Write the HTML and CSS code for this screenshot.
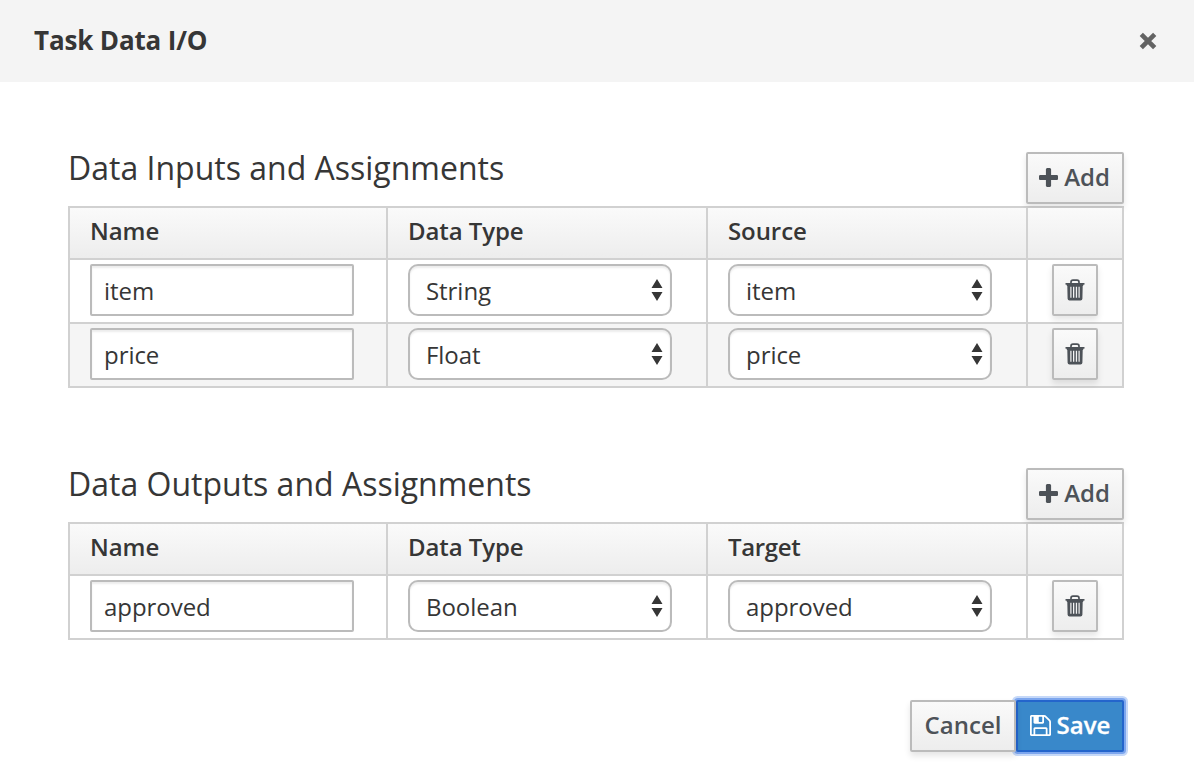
FILE: index.html
```
<!DOCTYPE html>
<html lang="en">
<head>
<meta charset="utf-8">
<title>Task Data I/O</title>
<link rel="stylesheet" href="styles.css">
</head>
<body>
<svg class="sprite" aria-hidden="true">
  <symbol id="trash" viewBox="0 0 20 22">
    <path d="M6 4.600V3.200Q6 1.200 8 1.200h4Q14 1.200 14 3.200V4.600" fill="none" stroke="currentColor" stroke-width="1.700"/>
    <path fill="currentColor" fill-rule="evenodd" d="M1 4h18q.6 0 .6.6v.5q0 .6-.6.6h-.8v1.300h-.5l-.3 12.700q-.1 1.800-1.900 1.800H4.500q-1.800 0-1.900-1.800L2.300 7h-.5V5.700H1q-.6 0-.6-.6v-.5Q.4 4 1 4zM5.300 7.700v11h1.200V7.700zM8 7.700v11h1.300V7.700zM10.800 7.700v11h1.300V7.700zM13.500 7.700v11h1.200V7.700z"/>
  </symbol>
  <symbol id="plus" viewBox="0 0 1408 1408">
    <path fill="currentColor" d="M1408 608v192q0 40-28 68t-68 28H896v416q0 40-28 68t-68 28H608q-40 0-68-28t-28-68V896H96q-40 0-68-28T0 800V608q0-40 28-68t68-28h416V96q0-40 28-68t68-28h192q40 0 68 28t28 68v416h416q40 0 68 28t28 68z"/>
  </symbol>
  <symbol id="updown" viewBox="0 0 12 22">
    <path fill="currentColor" d="M6 0l5.500 9H.5zM.5 13h11L6 22z"/>
  </symbol>
</svg>
<header class="header">
  <h1 class="title">Task Data I/O</h1>
  <svg class="close" viewBox="0 0 18 18"><path d="M2.300 2.300l13.400 13.400M15.700 2.300L2.300 15.700"/></svg>
</header>
<main class="body">
  <section class="section">
    <div class="section-head">
      <h2 class="heading">Data Inputs and Assignments</h2>
      <button class="btn add"><svg class="plus"><use href="#plus"/></svg>Add</button>
    </div>
    <div class="table">
      <div class="cell th">Name</div><div class="cell th">Data Type</div><div class="cell th">Source</div><div class="cell th"></div>
      <div class="cell"><div class="input">item</div></div>
      <div class="cell"><div class="select">String<svg class="updown"><use href="#updown"/></svg></div></div>
      <div class="cell"><div class="select">item<svg class="updown"><use href="#updown"/></svg></div></div>
      <div class="cell action"><button class="btn del" aria-label="Delete"><svg class="trash"><use href="#trash"/></svg></button></div>
      <div class="cell alt"><div class="input">price</div></div>
      <div class="cell alt"><div class="select">Float<svg class="updown"><use href="#updown"/></svg></div></div>
      <div class="cell alt"><div class="select">price<svg class="updown"><use href="#updown"/></svg></div></div>
      <div class="cell alt action"><button class="btn del" aria-label="Delete"><svg class="trash"><use href="#trash"/></svg></button></div>
    </div>
  </section>
  <section class="section">
    <div class="section-head">
      <h2 class="heading">Data Outputs and Assignments</h2>
      <button class="btn add"><svg class="plus"><use href="#plus"/></svg>Add</button>
    </div>
    <div class="table">
      <div class="cell th">Name</div><div class="cell th">Data Type</div><div class="cell th target">Target</div><div class="cell th"></div>
      <div class="cell"><div class="input">approved</div></div>
      <div class="cell"><div class="select">Boolean<svg class="updown"><use href="#updown"/></svg></div></div>
      <div class="cell"><div class="select">approved<svg class="updown"><use href="#updown"/></svg></div></div>
      <div class="cell action"><button class="btn del" aria-label="Delete"><svg class="trash"><use href="#trash"/></svg></button></div>
    </div>
  </section>
</main>
<footer class="footer">
  <button class="btn cancel">Cancel</button>
  <button class="btn save"><svg class="floppy" viewBox="0 0 1536 1536"><path fill="currentColor" transform="matrix(1 0 0 -1 0 1408)" d="M384 0h768v384h-768v-384zM1280 0h128v896q0 14-10 38.500t-20 34.500l-281 281q-10 10-34 20t-39 10v-416q0-40-28-68t-68-28h-576q-40 0-68 28t-28 68v416h-128v-1280h128v416q0 40 28 68t68 28h832q40 0 68-28t28-68v-416zM896 928v320q0 13-9.500 22.500t-22.500 9.500h-192q-13 0-22.500-9.500t-9.500-22.500v-320q0-13 9.500-22.500t22.500-9.500h192q13 0 22.500 9.500t9.500 22.500zM1536 896v-928q0-40-28-68t-68-28h-1344q-40 0-68 28t-28 68v1344q0 40 28 68t68 28h928q40 0 88-20t76-48l280-280q28-28 48-76t20-88z"/></svg>Save</button>
</footer>
</body>
</html>
```
FILE: styles.css
```
* { box-sizing: border-box; }
body {
  margin: 0;
  height: 782px;
  overflow: hidden;
  background: #fff;
  color: #363636;
  font: 24px/40px "Open Sans", sans-serif;
}
.sprite { display: none; }
.header {
  display: flex;
  justify-content: space-between;
  align-items: center;
  height: 82px;
  padding: 0 37px 0 34px;
  background: #f4f4f4;
}
.title {
  margin: -2px 0 0;
  font-size: 26px;
  font-weight: 700;
  letter-spacing: -.15px;
}
.close {
  width: 18px;
  height: 18px;
  fill: none;
  stroke: #636363;
  stroke-width: 4.600;
}
.body { padding: 70px 70px 0 68px; }
.section { margin-bottom: 80px; }
.section-head {
  display: flex;
  justify-content: space-between;
  height: 54px;
}
.heading { margin: -4px 0 0; font-size: 32px; font-weight: 400; }
.btn {
  display: flex;
  align-items: center;
  justify-content: center;
  height: 52px;
  padding: 0 0 2px;
  border: 2px solid #bbb;
  border-radius: 2px;
  background: linear-gradient(#fafafa, #ededed);
  box-shadow: 0 4px 6px rgba(3, 3, 3, .1);
  color: #4d5258;
  font: 600 24px/40px "Open Sans", sans-serif;
}
.add { width: 98px; gap: 6px; padding-right: 1px; }
.plus { width: 19px; height: 19px; }
.table {
  display: grid;
  grid-template-columns: 318px 320px 320px 96px;
  width: 1056px;
  border: 2px solid #d1d1d1;
  border-width: 2px 0 0 2px;
}
.cell {
  height: 64px;
  padding: 4px 0 0 20px;
  border: 2px solid #d1d1d1;
  border-width: 0 2px 2px 0;
}
.th {
  height: 52px;
  padding-top: 3px;
  background: linear-gradient(#fafafa, #ededed);
  font-weight: 600;
  letter-spacing: -.08px;
}
.target { letter-spacing: -.35px; }
.alt { background: #f5f5f5; }
.action { padding-left: 24px; }
.input, .select {
  display: flex;
  align-items: center;
  justify-content: space-between;
  width: 264px;
  height: 52px;
  padding: 2px 12px 0;
  border: 2px solid #bbb;
  border-radius: 2px;
  background: #fff;
  box-shadow: inset 0 2px 2px rgba(3, 3, 3, .075);
  letter-spacing: -.05px;
}
.select { padding: 2px 7.500px 0 16px; border-radius: 10px; }
.updown { width: 12px; height: 22px; margin-top: -2px; }
.del { width: 46px; padding-bottom: 1px; }
.trash { width: 20px; height: 22px; }
.footer {
  display: flex;
  justify-content: flex-end;
  padding: 0 70px 0 0;
  margin-top: -20px;
}
.cancel { position: relative; z-index: 1; width: 106px; }
.save {
  width: 108px;
  gap: 6px;
  border-color: #2465cc;
  background: #3988ca;
  box-shadow: 0 0 0 2px #7da6ee, 0 0 0 4px #c5d8f8;
  color: #fff;
  -webkit-text-stroke: .3px #fff;
}
.floppy { width: 21px; height: 21px; }
```
